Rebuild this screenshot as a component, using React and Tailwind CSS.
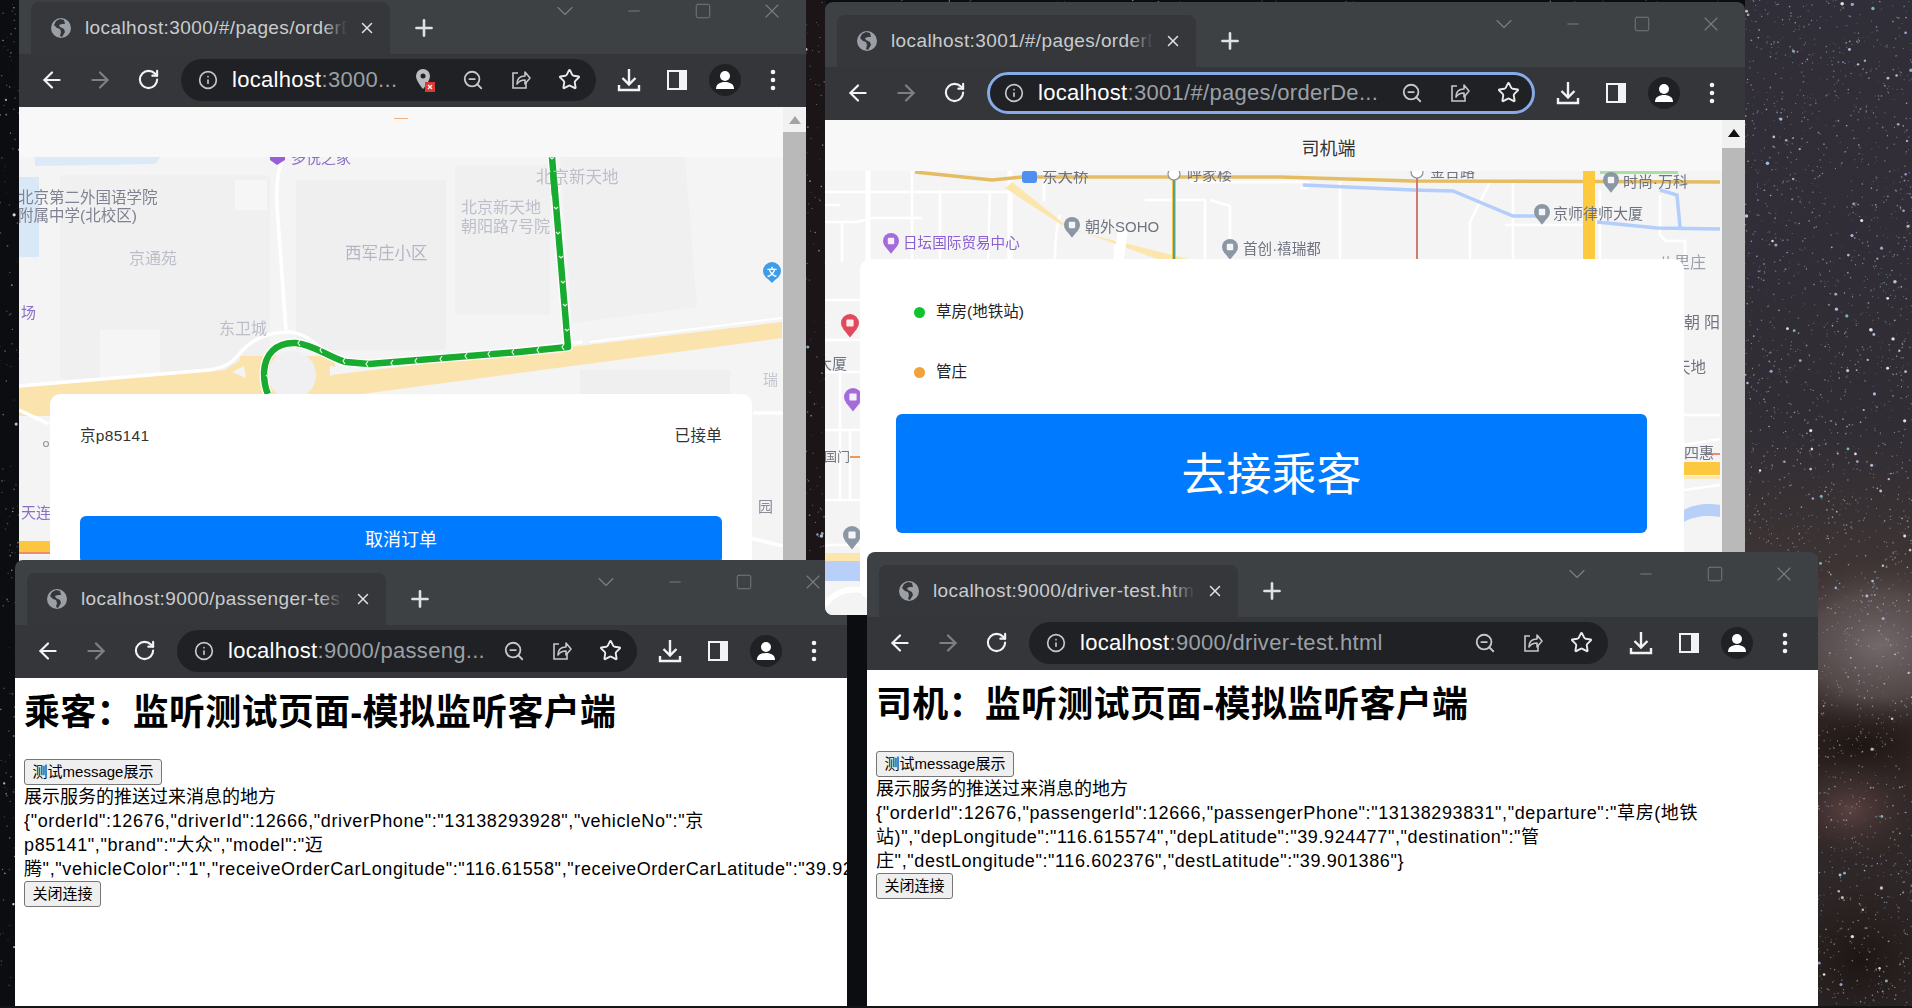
import React, { useMemo } from "react";
import { ArrowLeft, ArrowRight, RotateCw, Info, ZoomOut, Star, X, Plus, Minus, ChevronDown, Square } from "lucide-react";

const FONT = "font-['Liberation_Sans','Noto_Sans_CJK_SC',sans-serif]";

// wallpaper stars, seeded so that every load looks the same
const makeStars = () => {
  let seed = 12345;
  const rnd = () => {
    seed = (seed * 16807) % 2147483647;
    return seed / 2147483647;
  };
  const colors = ["#ffffff", "#bcd4ff", "#8fc7d8", "#e6cfc0", "#d8d8e8", "#a9b8e0"];
  const areas = [
    { x: 1745, y: 0, w: 167, h: 1008, n: 3000 },
    { x: 0, y: 0, w: 20, h: 1008, n: 160 },
    { x: 806, y: 0, w: 20, h: 560, n: 90 },
    { x: 820, y: 0, w: 940, h: 3, n: 25 },
  ];
  const stars = [];
  areas.forEach((a) => {
    for (let i = 0; i < a.n; i++) {
      const big = rnd() > 0.96;
      stars.push({
        x: a.x + rnd() * a.w,
        y: a.y + rnd() * a.h,
        r: big ? 1.1 + rnd() * 0.7 : 0.4 + rnd() * 0.5,
        o: big ? 0.85 : 0.2 + rnd() * 0.45,
        c: colors[Math.floor(rnd() * colors.length)],
      });
    }
  });
  return stars;
};

const Wallpaper = () => {
  const stars = useMemo(makeStars, []);
  return (
    <svg className="absolute inset-0" width="1912" height="1008" viewBox="0 0 1912 1008">
      <defs>
        <linearGradient id="sky" x1="0" y1="0" x2="0" y2="1">
          <stop offset="0" stopColor="#302e38" />
          <stop offset="0.42" stopColor="#302d35" />
          <stop offset="0.56" stopColor="#3d3433" />
          <stop offset="0.72" stopColor="#322826" />
          <stop offset="1" stopColor="#2c2729" />
        </linearGradient>
        <radialGradient id="cloud">
          <stop offset="0" stopColor="#73686a" />
          <stop offset="0.6" stopColor="#5e5253" stopOpacity="0.75" />
          <stop offset="1" stopColor="#4a3f40" stopOpacity="0" />
        </radialGradient>
        <radialGradient id="dust">
          <stop offset="0" stopColor="#1d1512" />
          <stop offset="1" stopColor="#2a201e" stopOpacity="0" />
        </radialGradient>
        <radialGradient id="warm">
          <stop offset="0" stopColor="#5b4240" />
          <stop offset="1" stopColor="#3a2d2d" stopOpacity="0" />
        </radialGradient>
      </defs>
      <rect width="1912" height="1008" fill="#0c0d10" />
      <rect x="806" width="20" height="560" fill="#1b1517" />
      <rect x="1745" width="167" height="1008" fill="url(#sky)" />
      <ellipse cx="1880" cy="645" rx="120" ry="85" fill="url(#cloud)" />
      <ellipse cx="1860" cy="745" rx="110" ry="45" fill="url(#dust)" />
      <ellipse cx="1850" cy="810" rx="70" ry="50" fill="url(#warm)" />
      <ellipse cx="1860" cy="960" rx="100" ry="90" fill="url(#dust)" />
      {stars.map((s, i) => (
        <circle key={i} cx={s.x} cy={s.y} r={s.r} fill={s.c} opacity={s.o} />
      ))}
    </svg>
  );
};

const GlobeIcon = () => (
  <svg width="20" height="20" viewBox="0 0 20 20" className="shrink-0">
    <circle cx="10" cy="10" r="10" fill="#9aa0a6" />
    <path d="M9 1 5 3 3 7l3 3 3 1 1 3-1 4 2 1 3-5-1-3-4-2-1-2 3-1 3 0-1-4z" fill="#35363a" />
  </svg>
);

const ShareIcon = () => (
  <svg width="22" height="22" viewBox="0 0 22 22" fill="none" stroke="#c4c7cb" strokeWidth="1.6">
    <path d="M8 4H3v15h13v-5" />
    <path d="M7 15c0-5 3-8 8-8V3l5 6-5 6v-4c-4 0-6 1-8 4z" strokeLinejoin="round" />
  </svg>
);

const BlockedLocIcon = () => (
  <svg width="24" height="26" viewBox="0 0 24 26">
    <path d="M10 2a7 7 0 0 0-7 7c0 5 7 13 7 13s7-8 7-13a7 7 0 0 0-7-7z" fill="#b9bcc0" />
    <circle cx="10" cy="9" r="2.5" fill="#202124" />
    <rect x="12" y="15" width="10" height="10" fill="#d93a36" />
    <path d="m15 18 4 4m0-4-4 4" stroke="#fff" strokeWidth="1.2" />
  </svg>
);

const DownloadIcon = () => (
  <svg width="26" height="26" viewBox="0 0 26 26" fill="none" stroke="#f1f3f4" strokeWidth="2.4">
    <path d="M13 2v15M6.5 11l6.5 6.5 6.5-6.5" />
    <path d="M3 18v5h20v-5" />
  </svg>
);

const PanelIcon = () => (
  <svg width="22" height="22" viewBox="0 0 22 22">
    <rect x="1" y="1" width="20" height="20" fill="#f1f3f4" />
    <rect x="3" y="3" width="10" height="16" fill="#35363a" />
  </svg>
);

const AvatarIcon = () => (
  <svg width="32" height="32" viewBox="0 0 32 32">
    <circle cx="16" cy="16" r="16" fill="#202124" />
    <circle cx="16" cy="12" r="5" fill="#fff" />
    <path d="M7 25c0-5 4-7 9-7s9 2 9 7z" fill="#fff" />
  </svg>
);

const DotsIcon = () => (
  <svg width="6" height="22" viewBox="0 0 6 22" fill="#f1f3f4">
    <circle cx="3" cy="3" r="2.3" />
    <circle cx="3" cy="11" r="2.3" />
    <circle cx="3" cy="19" r="2.3" />
  </svg>
);

const ToolBtn = ({ children }) => <div className="w-12 h-10 shrink-0 flex items-center justify-center">{children}</div>;

const Chrome = ({ title, host, rest, focused, blocked, children }) => (
  <>
    <div className="h-[65px] shrink-0 bg-[#3e4144] flex items-start">
      <div className="ml-3 mt-[13px] w-[359px] h-[52px] shrink-0 rounded-t-lg bg-[#35373a] flex items-center pl-5 relative">
        <GlobeIcon />
        <div className="ml-[14px] w-[262px] overflow-hidden whitespace-nowrap text-[19px] tracking-[0.4px] text-[#c9cccf] relative">
          {title}
          <div className="absolute right-0 top-0 bottom-0 w-6 bg-gradient-to-r from-transparent to-[#35373a]" />
        </div>
        <X size={18} strokeWidth={2} className="ml-[11px] text-[#dfe1e5]" />
      </div>
      <Plus size={26} strokeWidth={2.4} className="ml-[21px] mt-[26px] text-[#dfe1e5] shrink-0" />
      <div className="ml-auto flex h-[44px] items-center text-[#7a7d81]">
        <div className="w-[69px] flex justify-center"><ChevronDown size={28} strokeWidth={1} /></div>
        <div className="w-[69px] flex justify-center"><Minus size={18} strokeWidth={1.3} /></div>
        <div className="w-[69px] flex justify-center"><Square size={18} strokeWidth={1.2} /></div>
        <div className="w-[69px] flex justify-center"><X size={24} strokeWidth={1.1} /></div>
      </div>
    </div>
    <div className="h-[53px] shrink-0 bg-[#343639] flex items-center px-[9px] pb-[2px]">
      <ToolBtn><ArrowLeft size={26} className="text-[#f1f3f4]" /></ToolBtn>
      <ToolBtn><ArrowRight size={26} className="text-[#7d8084]" /></ToolBtn>
      <ToolBtn><RotateCw size={23} strokeWidth={2.2} className="text-[#f1f3f4]" /></ToolBtn>
      <div
        className={`mx-[9px] flex-1 min-w-0 h-[42px] rounded-full bg-[#202124] flex items-center pl-[17px] pr-[3px] ${
          focused ? "outline-[3px] outline outline-[#86abe6] -outline-offset-[3px]" : ""
        }`}
      >
        <Info size={20} className="text-[#c4c7cb] shrink-0" />
        <div className="ml-[14px] flex-1 min-w-0 whitespace-nowrap overflow-hidden text-[22px] tracking-[0.3px]">
          <span className="text-white">{host}</span>
          <span className="text-[#9aa0a6]">{rest}</span>
        </div>
        {blocked && <ToolBtn><BlockedLocIcon /></ToolBtn>}
        <ToolBtn><ZoomOut size={22} className="text-[#c4c7cb]" /></ToolBtn>
        <ToolBtn><ShareIcon /></ToolBtn>
        <ToolBtn><Star size={23} className="text-[#e8eaed]" /></ToolBtn>
      </div>
      <ToolBtn><DownloadIcon /></ToolBtn>
      <ToolBtn><PanelIcon /></ToolBtn>
      <ToolBtn><AvatarIcon /></ToolBtn>
      <ToolBtn><DotsIcon /></ToolBtn>
    </div>
    {children}
  </>
);

const Scrollbar = ({ arrow, thumbTop }) => (
  <div className="w-[23px] shrink-0 bg-[#f1f1f1] flex flex-col">
    <div className={`${thumbTop} shrink-0 flex justify-center pt-[9px]`}>
      <svg width="12" height="8" viewBox="0 0 12 8"><path d="M6 0l6 8H0z" fill={arrow} /></svg>
    </div>
    <div className="flex-1 bg-[#b9b9b9]" />
  </div>
);

const Pin = ({ x, y, color, r = 8 }) => (
  <g>
    <circle cx={x} cy={y} r={r} fill={color} />
    <path d={`M${x - r * 0.8} ${y + r * 0.6}L${x} ${y + r * 1.6}L${x + r * 0.8} ${y + r * 0.6}z`} fill={color} />
    <rect x={x - r * 0.4} y={y - r * 0.4} width={r * 0.8} height={r * 0.8} rx="1" fill="#fff" opacity="0.9" />
  </g>
);

// points along the green route where the little white chevrons sit
const ROUTE_MARKS_V = [[552, 158], [554, 183], [556, 208], [558, 233], [561, 257], [563, 282], [565, 305], [567, 330]];
const ROUTE_MARKS_H = [[563, 347], [538, 350], [513, 352], [489, 354], [466, 356], [441, 359], [416, 361], [392, 363], [367, 364], [344, 361], [321, 350], [299, 343]];
const ROUTE = "M552 157l16 190-49 5-150 12-23-2c-16-4-31-17-50-19-21-1-31 12-32 29-0 8 1 16 4 22";

const PassengerMap = () => (
  <svg className="block blur-[0.4px]" width="764" height="414" viewBox="19 157 764 414">
    <rect x="19" y="157" width="764" height="414" fill="#f4f4f5" />
    <rect x="60" y="175" width="210" height="205" rx="4" fill="#f0f0f1" />
    <rect x="296" y="180" width="150" height="170" fill="#efeff0" />
    <rect x="455" y="165" width="95" height="150" fill="#f0f0f1" />
    <path d="M560 157h125l12 150-125 16z" fill="#f0f0f1" />
    <rect x="100" y="330" width="60" height="70" fill="#f5f5f6" />
    <rect x="235" y="180" width="32" height="30" fill="#f6f6f7" />
    <rect x="580" y="370" width="150" height="30" fill="#efeff0" />
    <rect x="19" y="177" width="20" height="80" fill="#d9e8f7" />
    <path d="M35 157h125l-5 7-120 2z" fill="#dceaf7" />
    {/* yellow ring road */}
    <path d="M19 387 225 370l22-14-8 60H19z" fill="#fbe3ad" />
    <path d="M322 376 782 322v16L332 398z" fill="#fbe3ad" />
    <path d="M240 356h95v50h-95z" fill="#fbe3ad" />
    <circle cx="292" cy="375" r="24" fill="#f0f0f2" />
    <path d="M232 372l12-6 2 12z" fill="#f4f4f5" />
    <path d="M330 365l14 6-14 5z" fill="#f4f4f5" />
    {/* white roads */}
    <g fill="none" stroke="#fff" strokeWidth="3.5">
      <path d="M282 160c-6 14-6 40-4 60l8 110" />
      <path d="M19 386l190-16c14-2 22-6 30-16 14-16 30-22 48-22 20 0 32 16 46 26 14 8 26 8 45 6l204-22" />
      <path d="M19 410l30 14" />
      <path d="M753 413h30" />
      <path d="M590 342l192-24" strokeWidth="2" />
      <path d="M750 538l33 8" />
    </g>
    {/* route */}
    <path d={ROUTE} fill="none" stroke="#fff" strokeWidth="9" strokeLinejoin="round" />
    <path d={ROUTE} fill="none" stroke="#18ab30" strokeWidth="6.5" strokeLinejoin="round" />
    <g fill="none" stroke="#e6f7e8" strokeWidth="1.2">
      {ROUTE_MARKS_V.map(([x, y]) => (
        <path key={y} d={`M${x - 2} ${y - 1}l2 2 2-2`} />
      ))}
      {ROUTE_MARKS_H.map(([x, y]) => (
        <path key={x} d={`M${x + 1} ${y - 3}l-2 3 2 3`} />
      ))}
      <path d="M266 375l2 2 2-2" />
    </g>
    <path d="M19 541h31v11H19z" fill="#fcc640" />
    <path d="M19 553h31" stroke="#f08a6a" strokeWidth="2" />
    <path d="M19 556h31v15H19z" fill="#f1f1f1" />
    <circle cx="46" cy="444" r="2.5" fill="none" stroke="#9a9a9a" strokeWidth="1.2" />
    <path d="M270 160l7 5 8-5v-3h-15z" fill="#9a5fd8" />
    <circle cx="772" cy="271" r="9" fill="#3f9de8" />
    <path d="M767 278h10l-5 5z" fill="#3f9de8" />
    <g className={FONT}>
      <text x="18" y="203" fontSize="15.5" fill="#7f8290">北京第二外国语学院</text>
      <text x="18" y="221" fontSize="15.5" fill="#7f8290">附属中学(北校区)</text>
      <text x="129" y="264" fontSize="16" fill="#bcbfc9">京通苑</text>
      <text x="345" y="259" fontSize="16.5" fill="#b4b7c1">西军庄小区</text>
      <text x="219" y="334" fontSize="16" fill="#bcbfc9">东卫城</text>
      <text x="461" y="213" fontSize="16" fill="#bcbfc9">北京新天地</text>
      <text x="461" y="232" fontSize="16" fill="#bcbfc9">朝阳路7号院</text>
      <text x="291" y="163" fontSize="15" fill="#8b6fc5">多悦之家</text>
      <text x="21" y="318" fontSize="15" fill="#8b6fc5">场</text>
      <text x="21" y="518" fontSize="15" fill="#8b6fc5">天连</text>
      <text x="763" y="385" fontSize="15" fill="#c4c6cf">瑞</text>
      <text x="758" y="512" fontSize="15" fill="#8a8d99">园</text>
      <text x="767" y="276" fontSize="10" fill="#fff" fontWeight="700">文</text>
    </g>
    <text x="536" y="183" fontSize="16.5" fill="#bcbfc9" className={FONT}>北京新天地</text>
    <path d="M553 172l2 24" stroke="#18ab30" strokeWidth="6.5" />
  </svg>
);

const LIGHT_ROADS = [
  "M868 171v90",
  "M825 222h32l15-4h50",
  "M825 192h190",
  "M912 171v90M940 190v70M990 190l-2 70",
  "M825 205h15M842 222v40",
  "M1044 171v30M1010 171v90",
  "M1060 215c-3 10-5 25-5 45",
  "M1115 240v20M1145 200h60v60",
  "M1190 182h120M1210 200l20 6v50",
  "M1300 188h8M1340 182v80M1490 182l-20 40v40M1513 182v80",
  "M1505 225h90M1600 190v70",
  "M1660 195v40l6 6h20M1685 240v20",
  "M825 300h35M825 340h35M825 372h35M825 430h35M825 500h35",
  "M840 372v130M850 430v70",
  "M1684 415h36M1684 445l36-6M1684 490l36-5",
  "M825 545h35",
];

const DriverMap = () => (
  <svg className="block blur-[0.4px]" width="897" height="444" viewBox="825 171 897 444">
    <rect x="825" y="171" width="897" height="444" fill="#f4f4f5" />
    <g fill="none" stroke="#fff" strokeWidth="2.5">
      {LIGHT_ROADS.map((d) => (
        <path key={d} d={d} />
      ))}
      <path d="M868 171v90M1010 171v90" strokeWidth="5" />
    </g>
    <rect x="1600" y="171" width="78" height="3" fill="#a9e0a2" />
    <path d="M1012 182l60 48 120 30h-32l-100-36-55-36z" fill="#fde6ac" />
    <path d="M1118 228l10 0-4 32h-10z" fill="#fff" />
    <path d="M915 172l77 8 30-3 258 0 133 4 307 1" fill="none" stroke="#e6bc63" strokeWidth="3.5" />
    <path d="M1303 185l110 5 40 1 60 25h24M1597 222l60 6 63 1M1660 190l17 5 3 32" fill="none" stroke="#b3cefb" strokeWidth="3.5" />
    <rect x="1583" y="171" width="12" height="90" fill="#fcc93f" />
    <path d="M1174 176v86" stroke="#f6c344" strokeWidth="4" />
    <path d="M1174 176v86" stroke="#3aa39d" strokeWidth="1.8" />
    <path d="M1417 176v86" stroke="#cf7b72" strokeWidth="2" />
    <circle cx="1174" cy="174" r="6" fill="#fff" stroke="#8a8f99" strokeWidth="1.2" />
    <circle cx="1417" cy="172" r="6" fill="#fff" stroke="#8a8f99" strokeWidth="1.2" />
    {/* stuff left and right of the card */}
    <path d="M825 553h35v8h-35z" fill="#fde6ac" />
    <path d="M825 561h35v20h-35z" fill="#b8d0f8" />
    <path d="M825 605c10-14 25-18 40-14" fill="none" stroke="#fff" strokeWidth="6" />
    <path d="M1684 462h36v13h-36z" fill="#fcc840" />
    <path d="M1684 476h36v3h-36z" fill="#fde9b8" />
    <path d="M1684 510c10-6 25-7 36-5v12c-12-2-26-1-36 5z" fill="#b8d0f8" />
    <path d="M1704 454h16" stroke="#ee8870" strokeWidth="2" />
    <path d="M850 457h10" stroke="#ee9a50" strokeWidth="2" />
    <rect x="1022" y="171" width="15" height="12" rx="3" fill="#4d90f0" />
    <Pin x={891} y={241} color="#a56bdc" />
    <Pin x={1072} y={225} color="#8b97a5" />
    <Pin x={1230} y={247} color="#8b97a5" />
    <Pin x={1611} y={180} color="#8b97a5" />
    <Pin x={1542} y={212} color="#8b97a5" />
    <Pin x={850} y={323} color="#e14a5c" r={9} />
    <Pin x={853} y={397} color="#a56bdc" r={9} />
    <Pin x={852} y={535} color="#8b97a5" r={9} />
    <g className={FONT}>
      <text x="1042" y="182" fontSize="15.5" fill="#6f7480">东大桥</text>
      <text x="1187" y="180" fontSize="15" fill="#6f7480">呼家楼</text>
      <text x="1430" y="177" fontSize="15" fill="#6f7480">金台路</text>
      <text x="1085" y="232" fontSize="15" fill="#6f7480">朝外SOHO</text>
      <text x="903" y="248" fontSize="14.6" fill="#8a5fd0">日坛国际贸易中心</text>
      <text x="1243" y="254" fontSize="14.6" fill="#6f7480">首创·禧瑞都</text>
      <text x="1623" y="187" fontSize="15" fill="#6f7480">时尚·万科</text>
      <text x="1553" y="219" fontSize="15" fill="#6f7480">京师律师大厦</text>
      <text x="1658" y="268" fontSize="16" fill="#9ca0aa">八里庄</text>
      <text x="1684" y="328" fontSize="16" letterSpacing="4" fill="#6f7480">朝阳</text>
      <text x="1675" y="373" fontSize="15.5" fill="#6f7480">天地</text>
      <text x="1684" y="458" fontSize="15" fill="#6f7480">四惠</text>
      <text x="817" y="369" fontSize="15" fill="#6f7480">大厦</text>
      <text x="824" y="461" fontSize="13" fill="#6f7480">国门</text>
    </g>
  </svg>
);

const OldButton = ({ children, className }) => (
  <button className={`block h-[26px] bg-[#efefef] border border-[#767676] rounded-[3px] text-[15px] text-black ${className}`}>
    {children}
  </button>
);

const TestPage = ({ heading, lines }) => (
  <div className="flex-1 bg-white pl-[9px] pt-[13px] overflow-hidden text-black whitespace-nowrap">
    <h1 className="text-[36px] leading-[44px] font-bold tracking-[0.25px]">{heading}</h1>
    <OldButton className="mt-6 w-[138px]">测试message展示</OldButton>
    <div className="text-[18px] leading-[24px]">
      <div>展示服务的推送过来消息的地方</div>
      {lines.map((l) => (
        <div key={l} className="tracking-[0.62px]">{l}</div>
      ))}
    </div>
    <OldButton className="w-[77px]">关闭连接</OldButton>
  </div>
);

const PassengerWindow = () => (
  <div className="absolute left-[19px] top-[-11px] w-[787px] h-[582px] z-10 flex flex-col rounded-t-lg overflow-hidden">
    <Chrome title="localhost:3000/#/pages/orderDetail" host="localhost" rest=":3000..." blocked>
      <div className="flex-1 min-h-0 flex bg-[#f8f8f8]">
        <div className="w-[764px] shrink-0 flex flex-col">
          <div className="h-[50px] shrink-0 flex justify-center pt-[11px]">
            <div className="w-[14px] h-px bg-[#f0b080]" />
          </div>
          <div className="relative flex-1 min-h-0">
            <PassengerMap />
            <div className="absolute left-[31px] top-[237px] w-[702px] h-[200px] bg-white rounded-[10px] px-[30px] pt-[32px]">
              <div className="flex justify-between text-[15.5px] tracking-[0.3px] leading-[20px] text-[#333]">
                <span>京p85141</span>
                <span>已接单</span>
              </div>
              <button className="mt-[70px] w-full h-12 rounded-md bg-[#007aff] text-white text-[18px]">取消订单</button>
            </div>
          </div>
        </div>
        <Scrollbar arrow="#a3a3a3" thumbTop="h-[25px]" />
      </div>
    </Chrome>
  </div>
);

const DriverWindow = () => (
  <div className="absolute left-[825px] top-[2px] w-[920px] h-[613px] z-30 flex flex-col rounded-lg overflow-hidden">
    <Chrome title="localhost:3001/#/pages/orderDetail" host="localhost" rest=":3001/#/pages/orderDe..." focused>
      <div className="flex-1 min-h-0 flex bg-[#f8f8f8]">
        <div className="w-[897px] shrink-0 flex flex-col">
          <div className="h-[51px] shrink-0 flex items-center justify-center pl-[110px] pt-[7px] text-[18px] text-[#333]">司机端</div>
          <div className="relative flex-1 min-h-0">
            <DriverMap />
            <div className="absolute left-[35px] top-[88px] w-[824px] h-[340px] bg-white rounded-[10px] px-9 pt-[23px]">
              <div className="h-[60px] flex items-center pl-[18px] text-[15.5px] text-[#222]">
                <span className="w-[11px] h-[11px] rounded-full bg-[#12c22f] mr-[11px]" />
                草房(地铁站)
              </div>
              <div className="h-[60px] flex items-center pl-[18px] text-[15.5px] text-[#222]">
                <span className="w-[11px] h-[11px] rounded-full bg-[#f0a23c] mr-[11px]" />
                管庄
              </div>
              <button className="mt-3 w-[751px] h-[119px] pt-1 rounded-md bg-[#007aff] text-white text-[45px]">去接乘客</button>
            </div>
          </div>
        </div>
        <Scrollbar arrow="#111" thumbTop="h-7" />
      </div>
    </Chrome>
  </div>
);

const App = () => (
  <div className={`relative w-[1912px] h-[1008px] overflow-hidden ${FONT}`}>
    <Wallpaper />
    <PassengerWindow />
    <div className="absolute left-[15px] top-[560px] w-[832px] h-[460px] z-20 flex flex-col rounded-t-lg overflow-hidden">
      <Chrome title="localhost:9000/passenger-test.html" host="localhost" rest=":9000/passeng...">
        <TestPage
          heading="乘客：监听测试页面-模拟监听客户端"
          lines={[
            '{"orderId":12676,"driverId":12666,"driverPhone":"13138293928","vehicleNo":"京',
            'p85141","brand":"大众","model":"迈',
            '腾","vehicleColor":"1","receiveOrderCarLongitude":"116.61558","receiveOrderCarLatitude":"39.924477"}',
          ]}
        />
      </Chrome>
    </div>
    <DriverWindow />
    <div className="absolute left-[867px] top-[552px] w-[951px] h-[470px] z-40 flex flex-col rounded-t-lg overflow-hidden">
      <Chrome title="localhost:9000/driver-test.html" host="localhost" rest=":9000/driver-test.html">
        <TestPage
          heading="司机：监听测试页面-模拟监听客户端"
          lines={[
            '{"orderId":12676,"passengerId":12666,"passengerPhone":"13138293831","departure":"草房(地铁',
            '站)","depLongitude":"116.615574","depLatitude":"39.924477","destination":"管',
            '庄","destLongitude":"116.602376","destLatitude":"39.901386"}',
          ]}
        />
      </Chrome>
    </div>
    <div className="absolute left-0 right-0 bottom-0 h-[2px] z-50 bg-[#151515]" />
  </div>
);

export default App;
